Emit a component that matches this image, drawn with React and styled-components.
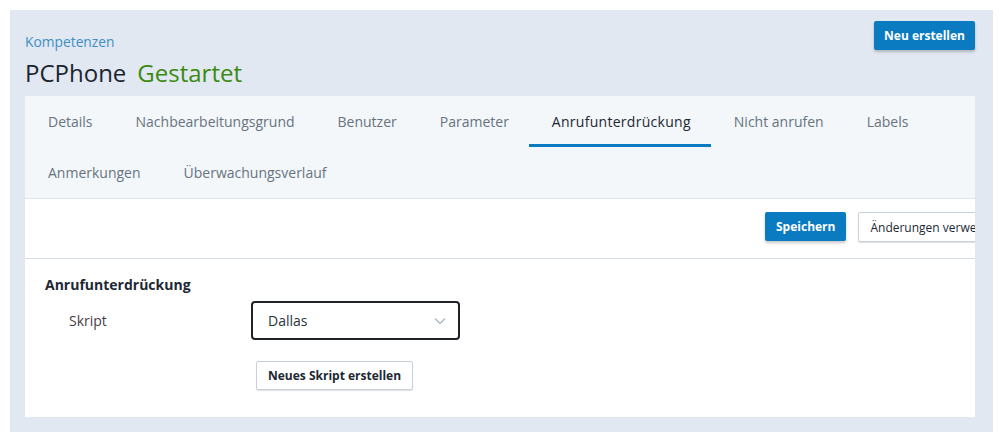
import React from 'react';
import styled, { createGlobalStyle } from 'styled-components';

const Global = createGlobalStyle`
  body {
    margin: 0;
    background: #ffffff;
    font-family: 'Open Sans', 'Noto Sans', sans-serif;
  }
`

const Page = styled.div`
  padding: 10px 12px 10px 10px;
  width: 1005px;
  box-sizing: border-box;
`

const Panel = styled.section`
  background: #e1e8f1;
  padding: 11px 18px 15px 15px;
  height: 422px;
  box-sizing: border-box;
  display: flex;
  flex-direction: column;
`

const Header = styled.header`
  display: flex;
  justify-content: space-between;
  align-items: flex-start;
  height: 75px;
`

const TitleBlock = styled.div`
  display: flex;
  flex-direction: column;
  padding-top: 12px;
`

const Crumb = styled.a`
  font-size: 13.8px;
  color: #3f8fc6;
  line-height: 18px;
`

const Title = styled.h1`
  margin: 6px 0 0;
  font-size: 24px;
  font-weight: 400;
  color: #1b2530;
  line-height: 32px;
`

const Status = styled.span`
  color: #3b8a12;
  margin-left: 11px;
`

const PrimaryButton = styled.button`
  font-family: inherit;
  font-size: 12px;
  font-weight: 700;
  color: #ffffff;
  background: #0a7bc1;
  border: none;
  border-radius: 2px;
  height: ${p => p.h || 29}px;
  padding: 0 ${p => p.px || 12}px;
  box-shadow: 0 2px 3px rgba(0, 0, 0, 0.22);
  cursor: pointer;
  white-space: nowrap;
`

const Card = styled.div`
  background: #ffffff;
  flex: 1;
  overflow: hidden;
  display: flex;
  flex-direction: column;
`

const Tabs = styled.nav`
  background: #f3f7fa;
  display: flex;
  flex-wrap: wrap;
  border-bottom: 1px solid #dde4ea;
`

const Tab = styled.div`
  height: 51px;
  box-sizing: border-box;
  padding: 3px 20px 0 23px;
  display: flex;
  align-items: center;
  font-size: 14px;
  letter-spacing: ${p => (p.active ? '0.28px' : '0')};
  color: ${p => (p.active ? '#1d2833' : '#67737e')};
  border-bottom: 3px solid ${p => (p.active ? '#0a7bc1' : 'transparent')};
  white-space: nowrap;
  cursor: pointer;
`

const Toolbar = styled.div`
  height: 60px;
  box-sizing: border-box;
  border-bottom: 1px solid #d6dde4;
  display: flex;
  align-items: flex-start;
  padding: 13px 0 0 740px;
  gap: 12px;
  width: 1100px;
`

const SecondaryButton = styled.button`
  font-family: inherit;
  font-size: 12px;
  font-weight: ${p => (p.bold ? 700 : 400)};
  color: #1d2833;
  background: #ffffff;
  border: 1px solid #c8d1da;
  border-radius: 2px;
  height: ${p => p.h || 30}px;
  padding: 0 ${p => p.px || 11}px;
  box-shadow: 0 1px 1px rgba(0, 0, 0, 0.12);
  white-space: nowrap;
  cursor: pointer;
`

const Form = styled.div`
  padding: 16px 20px;
`

const SectionTitle = styled.h2`
  margin: 0;
  font-size: 14px;
  font-weight: 700;
  color: #1d2833;
  line-height: 20px;
`

const FieldRow = styled.div`
  display: grid;
  grid-template-columns: 206px 209px;
  align-items: center;
  margin-top: 6px;
`

const FieldLabel = styled.label`
  padding-left: 24px;
  font-size: 14px;
  color: #4a3b48;
`

const SelectBox = styled.div`
  height: 39px;
  box-sizing: border-box;
  border: 2px solid #1f2328;
  border-radius: 4px;
  display: flex;
  align-items: center;
  justify-content: space-between;
  padding: 0 12px 0 15px;
  font-size: 14px;
  color: #2a333c;
`

const Actions = styled.div`
  padding-left: 211px;
  margin-top: 21px;
`

const Chevron = () => (
  <svg width="12" height="8" viewBox="0 0 12 8" fill="none">
    <path d="M1 1.5l5 5 5-5" stroke="#a8b1ba" strokeWidth="1.2" />
  </svg>
)

const tabsRow = [
  'Details',
  'Nachbearbeitungsgrund',
  'Benutzer',
  'Parameter',
  'Anrufunterdrückung',
  'Nicht anrufen',
  'Labels',
  'Anmerkungen',
  'Überwachungsverlauf',
]

const App = () => {
  return (
    <Page>
      <Global />
      <Panel>
        <Header>
          <TitleBlock>
            <Crumb>Kompetenzen</Crumb>
            <Title>
              PCPhone<Status>Gestartet</Status>
            </Title>
          </TitleBlock>
          <PrimaryButton h={29} px={10}>Neu erstellen</PrimaryButton>
        </Header>
        <Card>
          <Tabs>
            {tabsRow.map(t => (
              <Tab key={t} active={t === 'Anrufunterdrückung'}>{t}</Tab>
            ))}
          </Tabs>
          <Toolbar>
            <PrimaryButton h={29} px={11}>Speichern</PrimaryButton>
            <SecondaryButton h={30} px={11}>Änderungen verwerfen</SecondaryButton>
          </Toolbar>
          <Form>
            <SectionTitle>Anrufunterdrückung</SectionTitle>
            <FieldRow>
              <FieldLabel>Skript</FieldLabel>
              <SelectBox>
                Dallas
                <Chevron />
              </SelectBox>
            </FieldRow>
            <Actions>
              <SecondaryButton bold h={29} px={11}>Neues Skript erstellen</SecondaryButton>
            </Actions>
          </Form>
        </Card>
      </Panel>
    </Page>
  )
}

export default App;
